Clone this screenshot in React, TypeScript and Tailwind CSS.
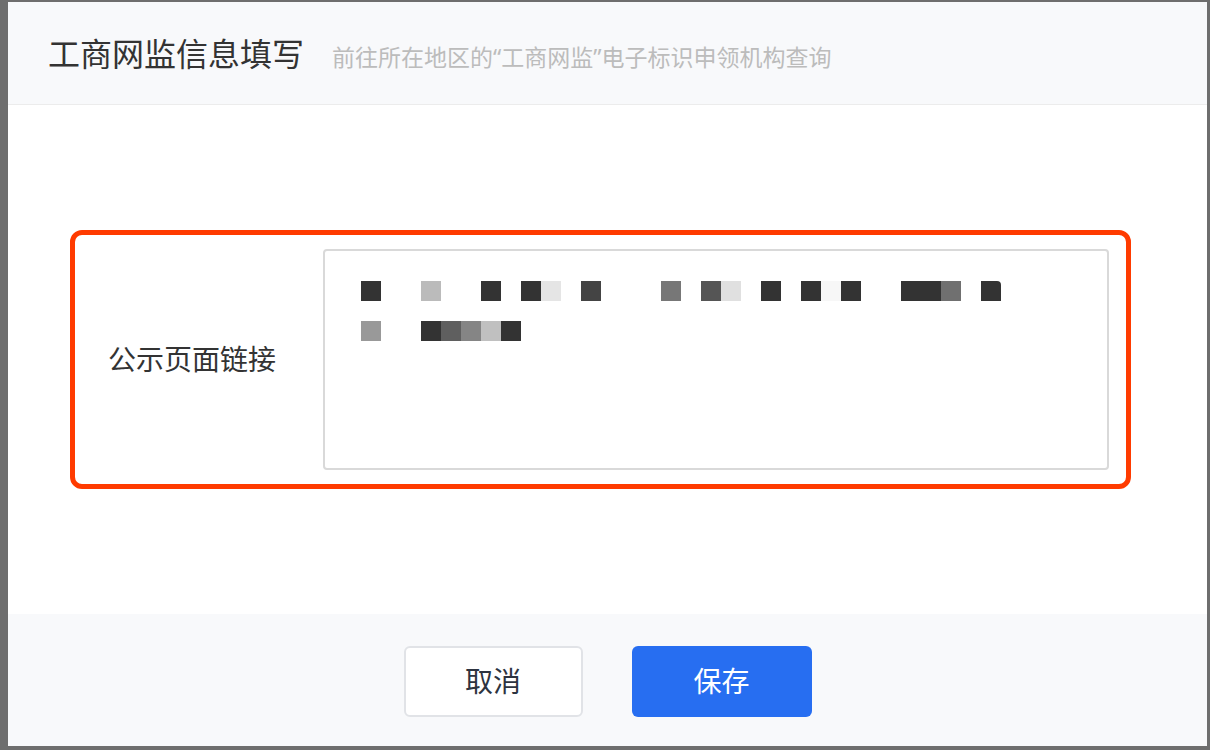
import React from "react";

const font = { fontFamily: '"Noto Sans CJK SC", "Noto Sans", sans-serif' };

// masked link text, one cell = 20px
const row1: (string | null)[] = [
  "#333", null, null, "#bbb", null, null, "#333", null, "#333", "#e5e5e5",
  null, "#444", null, null, null, "#777", null, "#555", "#e0e0e0", null,
  "#333", null, "#333", "#f7f7f7", "#333", null, null, "#333", "#333", "#707070",
  null, "#333",
];
const row2: (string | null)[] = ["#999", null, null, "#333", "#5f5f5f", "#858585", "#c0c0c0", "#333"];

function MaskRow({ cells }: { cells: (string | null)[] }) {
  return (
    <div className="flex h-[20px]">
      {cells.map((c, i) => (
        <div
          key={i}
          className={i === cells.length - 1 && cells.length > 20 ? "w-[20px] h-[20px] rounded-tr-[4px]" : "w-[20px] h-[20px]"}
          style={{ backgroundColor: c ?? "transparent" }}
        />
      ))}
    </div>
  );
}

const quote = "font-['Noto_Sans',sans-serif]";

export default function App() {
  return (
    <div
      className="w-[1210px] h-[750px] bg-[#6e6e6e] pt-[2px] pl-[8px] pr-[3px] pb-[4px] flex"
      style={font}
    >
      <div className="flex-1 flex flex-col bg-white">
        {/* header */}
        <div className="h-[103px] bg-[#f8f9fb] border-b-[1px] border-[#ececec] flex items-center pl-[40px] pb-[3px]">
          <div className="flex items-baseline">
            <span className="text-[32px] leading-[40px] text-[#333]">工商网监信息填写</span>
            <span className="ml-[28px] text-[23px] leading-[30px] text-[#bcbcbc]">
              前往所在地区的<span className={quote}>“</span>工商网监<span className={quote}>”</span>电子标识申领机构查询
            </span>
          </div>
        </div>

        {/* body */}
        <div className="flex-1 pt-[125px]">
          <div className="ml-[62px] w-[1061px] h-[259px] border-[5px] border-[#ff3b00] rounded-[12px] flex items-center pl-[33px] pr-[16px] pb-[3px]">
            <span className="w-[168px] text-[28px] leading-[36px] text-[#333]">公示页面链接</span>
            <div className="ml-[47px] w-[786px] h-[221px] mt-[3px] border-[2px] border-[#d9d9d9] rounded-[4px] pl-[36px] pt-[30px] flex flex-col gap-[20px]">
              <MaskRow cells={row1} />
              <MaskRow cells={row2} />
            </div>
          </div>
        </div>

        {/* footer */}
        <div className="h-[132px] bg-[#f8f9fb] flex justify-center items-start pt-[32px] gap-[49px]">
          <button className="w-[179px] h-[71px] pb-[4px] bg-white border-[2px] border-[#e1e3e7] rounded-[6px] text-[28px] text-[#2d3340]">
            取消
          </button>
          <button className="w-[180px] h-[71px] pb-[4px] bg-[#276ef1] rounded-[6px] text-[28px] text-white">
            保存
          </button>
        </div>
      </div>
    </div>
  );
}
